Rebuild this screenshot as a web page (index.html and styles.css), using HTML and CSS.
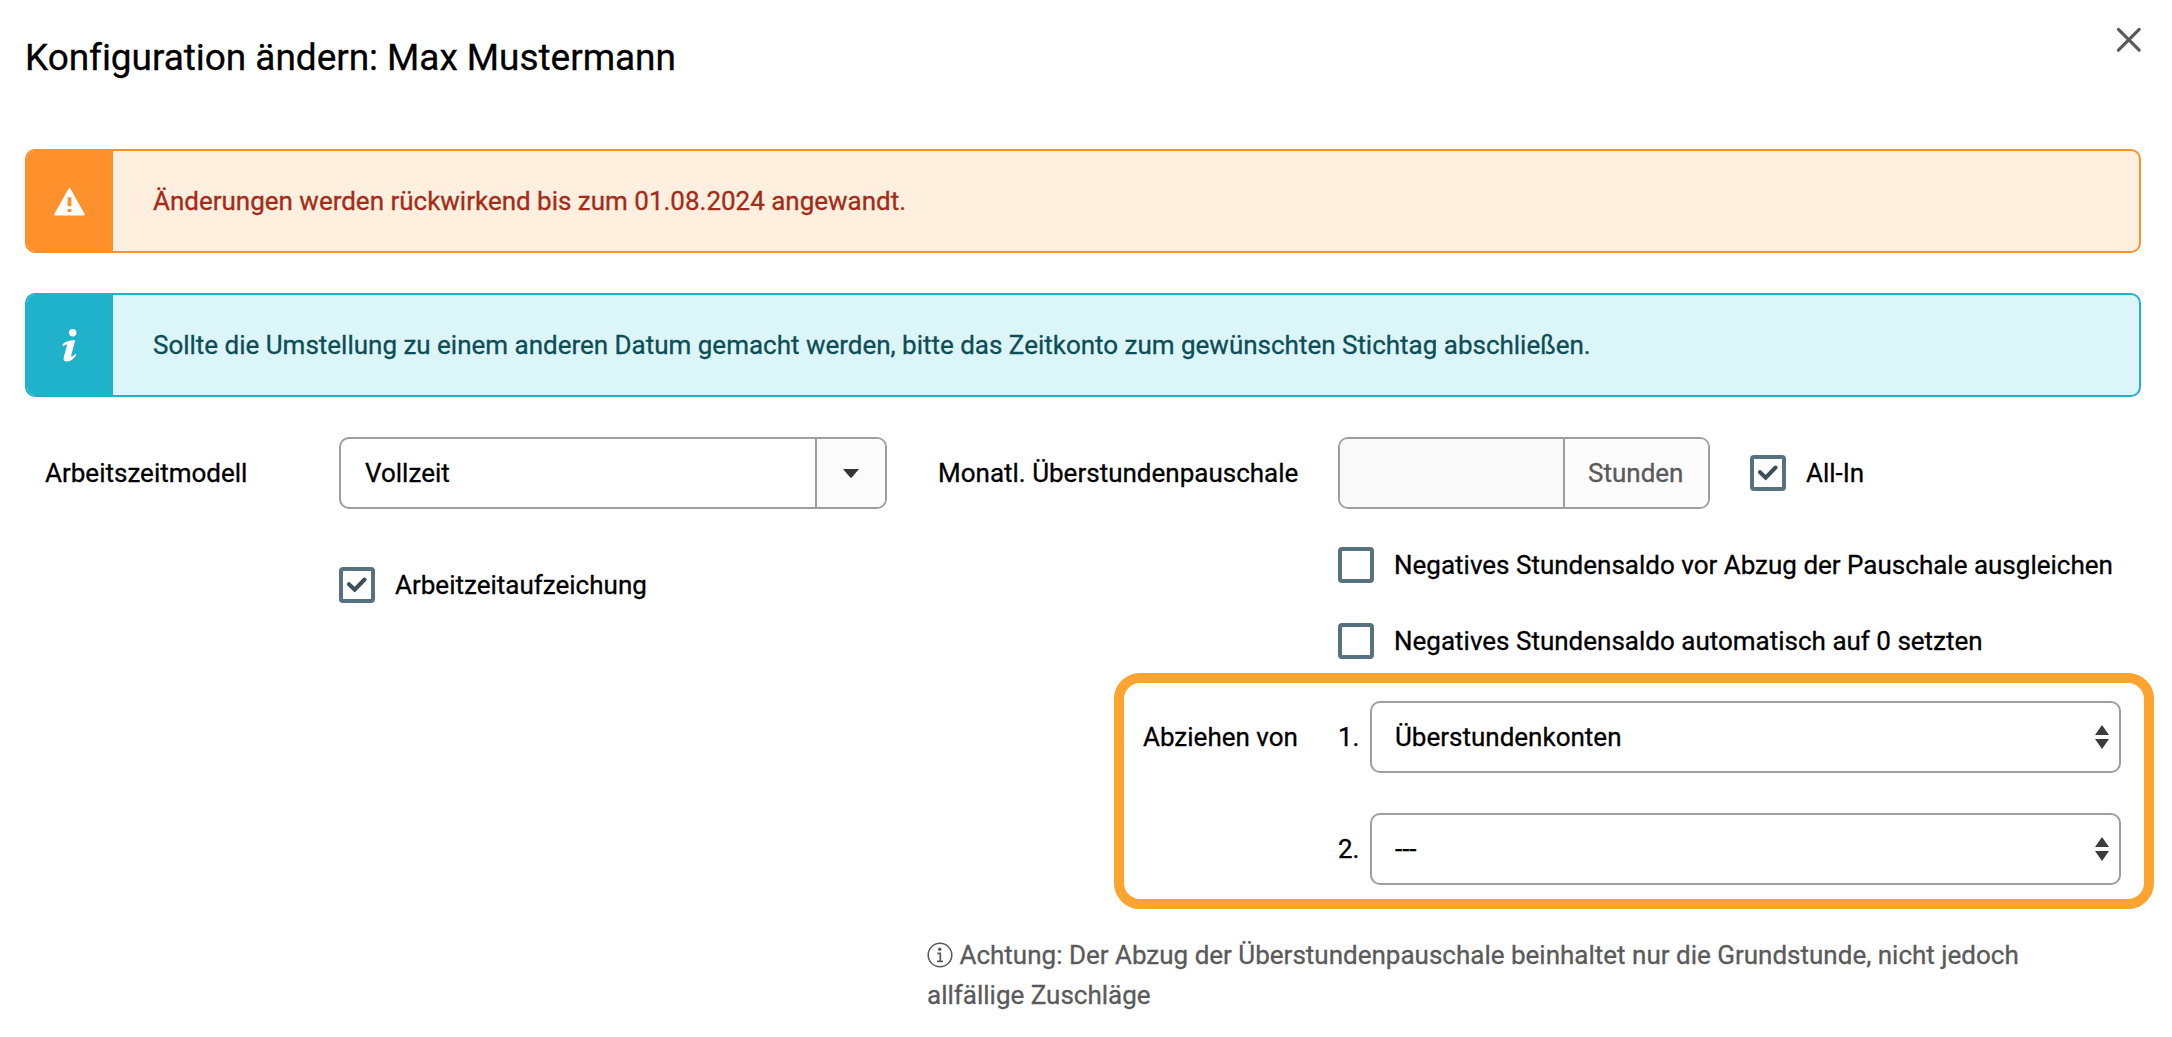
FILE: index.html
```html
<!DOCTYPE html>
<html lang="de">
<head>
<meta charset="utf-8">
<title>Konfiguration ändern</title>
<link rel="stylesheet" href="styles.css">
</head>
<body>
<main class="dialog">
  <header class="head">
    <h1 class="title">Konfiguration ändern: Max Mustermann</h1>
    <button class="close" aria-label="Schließen"><svg width="26" height="26" viewBox="0 0 26 26"><path d="M2.4 2.4 23.2 23.2M23.2 2.4 2.4 23.2" fill="none" stroke="#5a5a5a" stroke-width="3.2" stroke-linecap="round"/></svg></button>
  </header>
  <div class="alert warn">
    <div class="alert-icon"><svg width="31" height="28" viewBox="0 0 31 28"><path fill="#fff" fill-rule="evenodd" d="M14.500 .8a1.200 1.200 0 0 1 2 0L30.700 26a1 1 0 0 1-.9 1.500H1.200A1 1 0 0 1 .3 26ZM13.600 9.300h3.800v9h-3.800zM13.600 21h3.800v3h-3.800z"/></svg></div>
    <p class="alert-text">Änderungen werden rückwirkend bis zum 01.08.2024 angewandt.</p>
  </div>
  <div class="alert info">
    <div class="alert-icon"><svg width="15" height="33" viewBox="0 0 15 33"><ellipse cx="10.7" cy="3.8" rx="3.7" ry="3.7" fill="#fff"/><path fill="#fff" d="M.3 15.400C3.500 12.300 8 11.200 13.200 11.300L9.400 25.400c-.5 2 .1 2.500 1.300 1.800 1-.6 1.800-1.400 2.500-2.200l1.100.8C11.900 30 8.500 32.500 5.200 32.500c-3 0-4.200-1.700-3.400-4.600L4.900 16.800c.3-1.200-.3-1.500-1.300-1l-2.300 1.300Z"/></svg></div>
    <p class="alert-text">Sollte die Umstellung zu einem anderen Datum gemacht werden, bitte das Zeitkonto zum gewünschten Stichtag abschließen.</p>
  </div>
  <div class="form">
    <section class="left">
      <span class="label">Arbeitszeitmodell</span>
      <div class="combo"><span class="combo-value">Vollzeit</span><span class="combo-arrow"><svg width="16" height="9" viewBox="0 0 16 9"><path d="M0 0h16L9 8.300q-1 1-2 0Z" fill="#333"/></svg></span></div>
      <label class="check record"><span class="box"><svg width="20" height="16" viewBox="0 0 20 16"><path d="M2 7.200 7.700 12.600 17.500 2.500" fill="none" stroke="#3c4f58" stroke-width="4" stroke-linecap="round"/></svg></span>Arbeitzeitaufzeichung</label>
    </section>
    <section class="right">
      <div class="row">
        <span class="label overtime">Monatl. Überstundenpauschale</span>
        <div class="group"><span class="group-input"></span><span class="group-unit">Stunden</span></div>
        <label class="check allin"><span class="box"><svg width="20" height="16" viewBox="0 0 20 16"><path d="M2 7.200 7.700 12.600 17.500 2.500" fill="none" stroke="#3c4f58" stroke-width="4" stroke-linecap="round"/></svg></span>All-In</label>
      </div>
      <div class="options">
        <label class="check"><span class="box"></span>Negatives Stundensaldo vor Abzug der Pauschale ausgleichen</label>
        <label class="check"><span class="box"></span>Negatives Stundensaldo automatisch auf 0 setzten</label>
      </div>
      <div class="highlight">
        <span class="deduct">Abziehen von</span>
        <span class="num">1.</span>
        <div class="select"><span>Überstundenkonten</span><svg width="14" height="24" viewBox="0 0 14 24"><path d="M7 0 14 10H0ZM0 14h14L7 24Z" fill="#3c3c3c"/></svg></div>
        <span class="num second">2.</span>
        <div class="select"><span>---</span><svg width="14" height="24" viewBox="0 0 14 24"><path d="M7 0 14 10H0ZM0 14h14L7 24Z" fill="#3c3c3c"/></svg></div>
      </div>
      <p class="note"><svg class="note-icon" width="26" height="26" viewBox="0 0 26 26"><circle cx="13" cy="13" r="11.800" fill="none" stroke="#5a5a5a" stroke-width="1.500"/><circle cx="12.700" cy="7.300" r="1.700" fill="#5a5a5a"/><path d="M10.300 11.300h3v7.500M10 19.300h6" fill="none" stroke="#5a5a5a" stroke-width="1.700"/></svg> Achtung: Der Abzug der Überstundenpauschale beinhaltet nur die Grundstunde, nicht jedoch allfällige Zuschläge</p>
    </section>
  </div>
</main>
</body>
</html>
```
FILE: styles.css
```css
* { box-sizing: border-box; }
body { margin: 0; background: #fff; color: #000; font: 26px/40px Roboto, sans-serif; -webkit-text-stroke: 0.3px; }
h1, p { margin: 0; }
svg { display: block; flex: none; }
.dialog { width: 2172px; height: 1037px; padding: 0 31px 0 25px; overflow: hidden; }
.head { display: flex; justify-content: space-between; align-items: flex-start; height: 149px; padding-top: 27px; }
.title { font-size: 37px; font-weight: 400; line-height: 62px; letter-spacing: -0.05px; }
.close { margin-right: -1px; padding: 0; border: 0; background: none; }
.alert { display: flex; height: 104px; margin-bottom: 40px; border: 2px solid; border-radius: 10px; overflow: hidden; }
.alert-icon { display: flex; align-items: center; justify-content: center; width: 86px; padding-right: 2px; }
.alert-text { padding: 30px 0 0 40px; letter-spacing: -0.01px; }
.warn { border-color: #fd902b; background: #feefde; }
.warn .alert-icon { background: #fd902b; padding-top: 2px; }
.warn .alert-text { color: #a22c18; }
.info { border-color: #20b2cb; background: #dcf5f9; }
.info .alert-icon { background: #20b2cb; }
.info .alert-text { color: #0c4d56; }
.form { display: flex; justify-content: space-between; }
.left { display: grid; grid-template-columns: 294px 548px; grid-template-rows: 72px 36px; row-gap: 58px; align-items: center; align-content: start; padding-left: 20px; }
.record { grid-column: 2; }
.combo, .group, .select { display: flex; height: 72px; border: 2px solid #9e9e9e; border-radius: 10px; overflow: hidden; }
.combo-value { flex: 1; padding: 14px 24px; }
.combo-arrow { display: flex; align-items: center; justify-content: center; width: 70px; padding-right: 1px; border-left: 2px solid #9e9e9e; background: #fbfbfb; }
.check { display: flex; align-items: center; height: 36px; white-space: nowrap; }
.box { display: flex; align-items: center; justify-content: center; width: 36px; height: 36px; margin-right: 20px; border: 4px solid #587180; border-radius: 4px; }
.right { width: 1216px; margin-right: -13px; }
.row { display: flex; align-items: center; }
.overtime { width: 400px; }
.group { width: 372px; }
.group-input { width: 223px; background: #f9f9f9; }
.group-unit { flex: 1; padding: 14px 0 14px 23px; border-left: 2px solid #9e9e9e; background: #fcfcfc; color: #5a5a5a; }
.allin { margin-left: 40px; }
.options { display: grid; gap: 40px; padding: 38px 0 14px 400px; }
.highlight { display: grid; grid-template-columns: 195px 32px 751px; row-gap: 40px; align-items: center; width: 1040px; height: 236px; margin-left: 176px; padding: 18px 0 0 19px; align-content: start; border: 10px solid #fda32f; border-radius: 26px; }
.second { grid-column: 2; }
.select { align-items: center; justify-content: space-between; padding: 0 10px 0 23px; }
.note { width: 1130px; margin: 26px 0 0 -11px; color: #5a5a5a; }
.note-icon { display: inline-block; vertical-align: -4px; }
```
